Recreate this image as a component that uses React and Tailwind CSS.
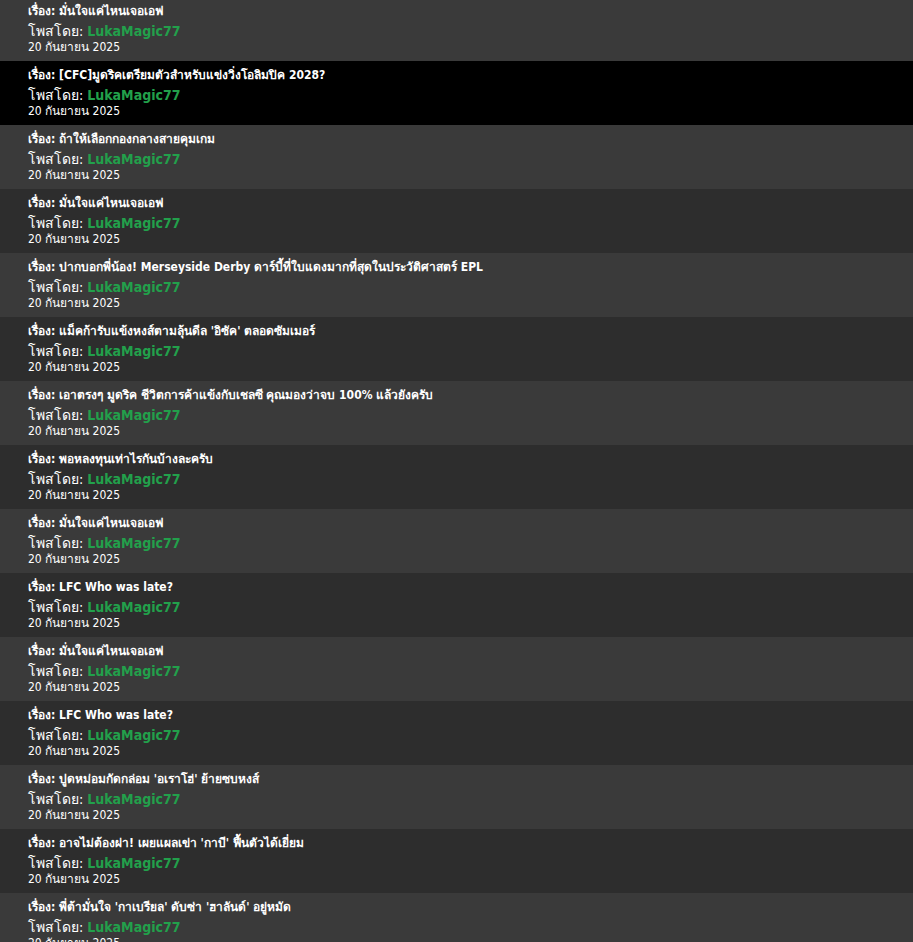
const POSTS = [
  'มั่นใจแค่ไหนเจอเอฟ',
  '[CFC]มูดริคเตรียมตัวสำหรับแข่งวิ่งโอลิมปิค 2028?',
  'ถ้าให้เลือกกองกลางสายคุมเกม',
  'มั่นใจแค่ไหนเจอเอฟ',
  'ปากบอกพี่น้อง! Merseyside Derby ดาร์บี้ที่ใบแดงมากที่สุดในประวัติศาสตร์ EPL',
  "แม็คก้ารับแข้งหงส์ตามลุ้นดีล 'อิซัค' ตลอดซัมเมอร์",
  'เอาตรงๆ มูดริค ชีวิตการค้าแข้งกับเชลซี คุณมองว่าจบ 100% แล้วยังครับ',
  'พอหลงทุนเท่าไรกันบ้างละครับ',
  'มั่นใจแค่ไหนเจอเอฟ',
  'LFC Who was late?',
  'มั่นใจแค่ไหนเจอเอฟ',
  'LFC Who was late?',
  "ปูดหม่อมกัดกล่อม 'อเราโฮ่' ย้ายซบหงส์",
  "อาจไม่ต้องผ่า! เผยแผลเข่า 'กาบี' ฟื้นตัวได้เยี่ยม",
  "พี่ต้ามั่นใจ 'กาเบรียล' ดับซ่า 'ฮาลันด์' อยู่หมัด",
];

function PostRow({ title, index }) {
  const bg = index === 1 ? 'bg-black' : index % 2 === 0 ? 'bg-[#3a3a3a]' : 'bg-[#2d2d2d]';
  return (
    <div className={`${bg} h-16 pl-7 pt-[4px] text-white`}>
      <p className="text-[12px] font-bold leading-[20px]">เรื่อง: {title}</p>
      <p className="text-[14px] leading-[20px]">
        โพสโดย: <span className="font-bold text-[#22a04b]">LukaMagic77</span>
      </p>
      <p className="text-[12px] leading-[12px]">20 กันยายน 2025</p>
    </div>
  );
}

export default function App() {
  return (
    <div
      className="min-h-screen bg-[#2d2d2d] overflow-hidden"
      style={{ fontFamily: 'Tahoma, "DejaVu Sans Condensed", "Noto Sans", sans-serif' }}
    >
      <div className="-mt-[3px]">
        {POSTS.map((t, i) => (
          <PostRow key={i} title={t} index={i} />
        ))}
      </div>
    </div>
  );
}
